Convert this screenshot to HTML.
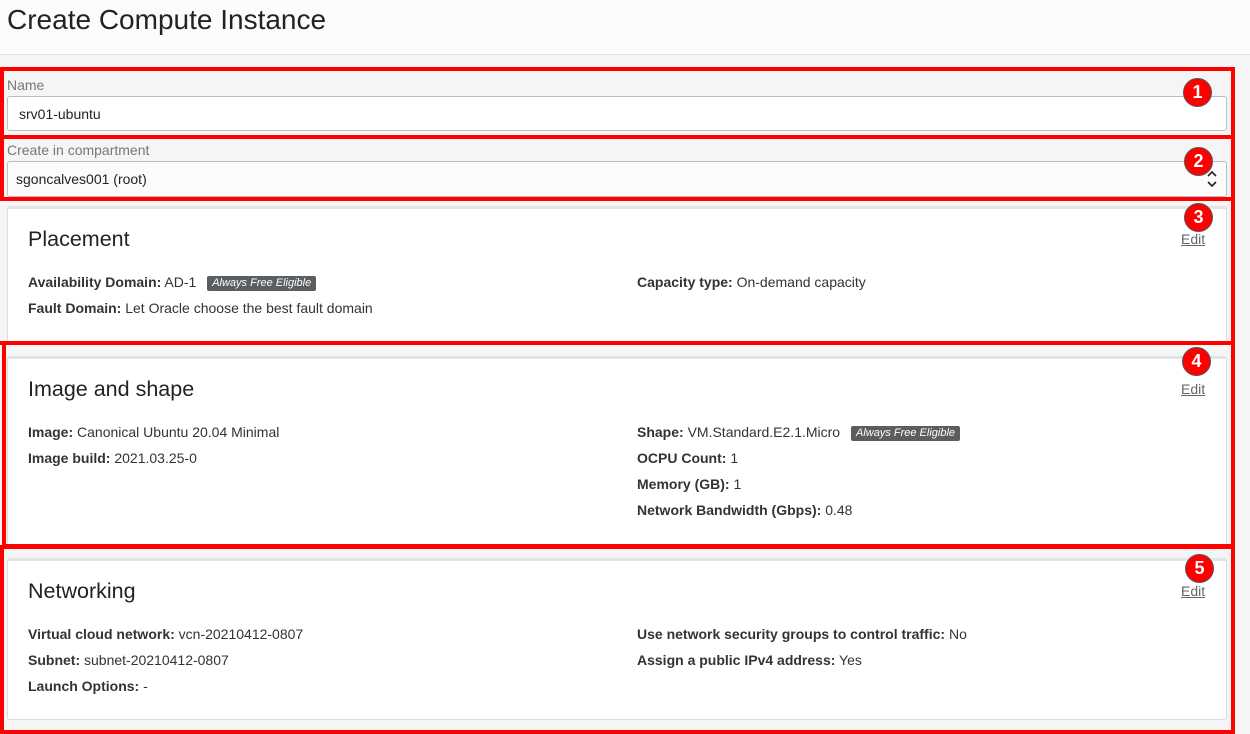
<!DOCTYPE html>
<html><head><meta charset="utf-8"><style>
*{margin:0;padding:0;box-sizing:border-box}
body{width:1250px;height:734px;background:#f5f5f5;font-family:"Liberation Sans",sans-serif;color:#333;position:relative;overflow:hidden}
.a{position:absolute}
.hdr{left:0;top:0;width:1250px;height:55px;background:#fcfcfc;border-bottom:1px solid #e2e2e2}
.title{left:7px;top:3px;font-size:28px;line-height:34px;color:#222}
.lbl{font-size:14px;color:#777;line-height:16px}
.inp{background:#fff;border:1px solid #b9bfc6;border-radius:3px;font-size:14px;line-height:32px;color:#222}
.card{background:#fff;border:1px solid #dcdcdc;border-top:3px solid #e2e3e6;border-radius:3px}
.h{font-size:21.5px;line-height:26px;color:#222}
.t{font-size:14px;line-height:20px;color:#333;white-space:nowrap}
.badge{display:inline-block;background:#5b5e61;color:#fff;font-style:italic;font-size:11px;line-height:15px;padding:0 5px;border-radius:2px;margin-left:7px;vertical-align:1px}
.edit{font-size:14px;line-height:20px;color:#666;text-decoration:underline}
.box{border:4px solid #f00}
.c{width:29px;height:29px;border-radius:50%;background:#f00;border:1px solid #555;color:#fff;font-weight:bold;font-size:18px;line-height:27px;text-align:center}
</style></head><body>
<div class="a hdr"></div>
<div class="a title">Create Compute Instance</div>

<div class="a lbl" style="left:7px;top:77px">Name</div>
<div class="a inp" style="left:7px;top:96px;width:1220px;height:35px;padding-left:11px;line-height:34px">srv01-ubuntu</div>
<div class="a lbl" style="left:7px;top:142px">Create in compartment</div>
<div class="a inp" style="left:7px;top:161px;width:1220px;height:36px;padding-left:8px;background:#fbfbfb;line-height:35px">sgoncalves001 (root)</div>
<svg class="a" style="left:1206px;top:170px" width="12" height="18" viewBox="0 0 12 18"><path d="M2 6 L6 2 L10 6 M2 12 L6 16 L10 12" fill="none" stroke="#222" stroke-width="1.6"/></svg>

<div class="a card" style="left:7px;top:206px;width:1220px;height:136px"></div>
<div class="a h" style="left:28px;top:226px">Placement</div>
<div class="a edit" style="left:1181px;top:229px">Edit</div>
<div class="a t" style="left:28px;top:272px"><b>Availability Domain:</b> AD-1 <span class="badge">Always Free Eligible</span></div>
<div class="a t" style="left:28px;top:298px"><b>Fault Domain:</b> Let Oracle choose the best fault domain</div>
<div class="a t" style="left:637px;top:272px"><b>Capacity type:</b> On-demand capacity</div>

<div class="a card" style="left:7px;top:356px;width:1220px;height:190px"></div>
<div class="a h" style="left:28px;top:376px">Image and shape</div>
<div class="a edit" style="left:1181px;top:379px">Edit</div>
<div class="a t" style="left:28px;top:422px"><b>Image:</b> Canonical Ubuntu 20.04 Minimal</div>
<div class="a t" style="left:28px;top:448px"><b>Image build:</b> 2021.03.25-0</div>
<div class="a t" style="left:637px;top:422px"><b>Shape:</b> VM.Standard.E2.1.Micro <span class="badge">Always Free Eligible</span></div>
<div class="a t" style="left:637px;top:448px"><b>OCPU Count:</b> 1</div>
<div class="a t" style="left:637px;top:474px"><b>Memory (GB):</b> 1</div>
<div class="a t" style="left:637px;top:500px"><b>Network Bandwidth (Gbps):</b> 0.48</div>

<div class="a card" style="left:7px;top:558px;width:1220px;height:162px"></div>
<div class="a h" style="left:28px;top:578px">Networking</div>
<div class="a edit" style="left:1181px;top:581px">Edit</div>
<div class="a t" style="left:28px;top:624px"><b>Virtual cloud network:</b> vcn-20210412-0807</div>
<div class="a t" style="left:28px;top:650px"><b>Subnet:</b> subnet-20210412-0807</div>
<div class="a t" style="left:28px;top:676px"><b>Launch Options:</b> -</div>
<div class="a t" style="left:637px;top:624px"><b>Use network security groups to control traffic:</b> No</div>
<div class="a t" style="left:637px;top:650px"><b>Assign a public IPv4 address:</b> Yes</div>

<div class="a box" style="left:0;top:67px;width:1235px;height:72px"></div>
<div class="a box" style="left:0;top:135px;width:1235px;height:66px"></div>
<div class="a box" style="left:-4px;top:197px;width:1239px;height:148px;border-left:none"></div>
<div class="a box" style="left:2px;top:341px;width:1233px;height:207px"></div>
<div class="a box" style="left:0;top:545px;width:1235px;height:189px"></div>

<div class="a c" style="left:1183px;top:78px">1</div>
<div class="a c" style="left:1184px;top:147px">2</div>
<div class="a c" style="left:1184px;top:203px">3</div>
<div class="a c" style="left:1182px;top:347px">4</div>
<div class="a c" style="left:1185px;top:554px">5</div>
</body></html>
